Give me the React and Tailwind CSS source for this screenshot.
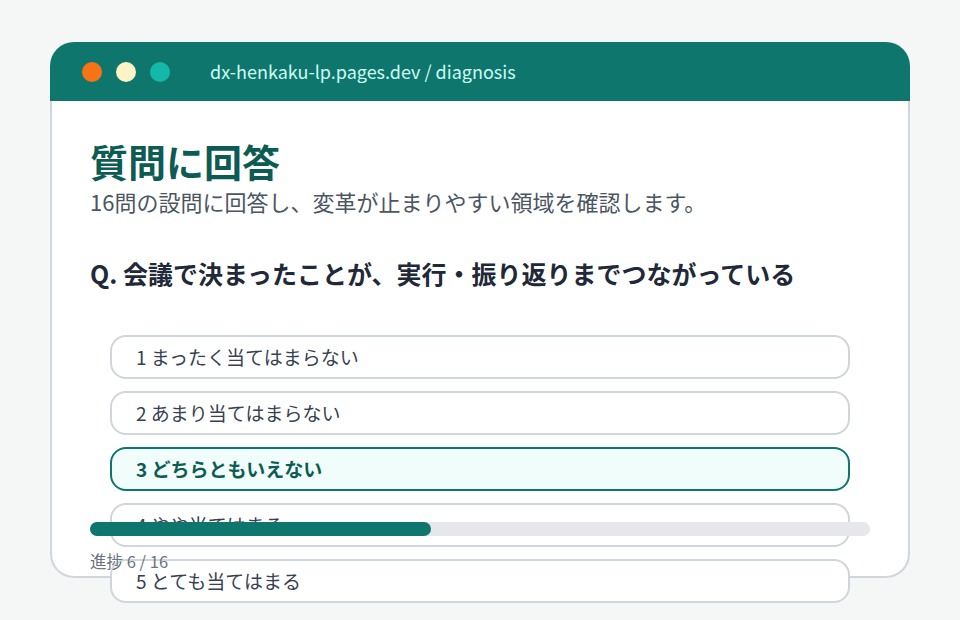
import React from "react";

const options = [
  { value: 1, label: "まったく当てはまらない" },
  { value: 2, label: "あまり当てはまらない" },
  { value: 3, label: "どちらともいえない" },
  { value: 4, label: "やや当てはまる" },
  { value: 5, label: "とても当てはまる" },
];

const App = () => {
  const selected = 3;
  const current = 6;
  const total = 16;

  return (
    <div
      className="min-h-screen bg-[#f5f7f6] pt-[42px] px-[50px]"
      style={{ fontFamily: '"Noto Sans CJK JP", "Noto Sans", sans-serif' }}
    >
      <div className="w-[860px]">
        {/* browser bar */}
        <div className="h-[59px] rounded-t-[24px] bg-[#0f766e] flex items-center pl-[32px]">
          <div className="flex gap-[14px]">
            <span className="w-5 h-5 rounded-full bg-[#f97316]" />
            <span className="w-5 h-5 rounded-full bg-[#fef3c7]" />
            <span className="w-5 h-5 rounded-full bg-[#14b8a6]" />
          </div>
          <span className="ml-[40px] text-[18px] text-[#ccfbf1]">
            dx-henkaku-lp.pages.dev / diagnosis
          </span>
        </div>

        {/* page body */}
        <div className="relative h-[477px] bg-white border-x-2 border-b-2 border-gray-300 rounded-b-[24px] px-[38px] pt-[37px]">
          <h1 className="text-[38px] leading-[46px] font-bold text-[#0d5c53]">質問に回答</h1>
          <p className="mt-[2px] text-[22px] leading-[30px] text-[#4b5563]">
            16問の設問に回答し、変革が止まりやすい領域を確認します。
          </p>
          <h2 className="mt-10 text-[25px] leading-[34px] font-bold text-[#1f2937]">
            Q. 会議で決まったことが、実行・振り返りまでつながっている
          </h2>

          <div className="mt-[45px] mx-5 flex flex-col gap-3">
            {options.map((o) =>
              o.value === selected ? (
                <div
                  key={o.value}
                  className="h-[44px] flex items-center pl-6 rounded-2xl border-2 border-[#0f766e] bg-[#f0fdfa] text-[19px] font-bold text-[#0d5c53]"
                >
                  {o.value} {o.label}
                </div>
              ) : (
                <div
                  key={o.value}
                  className="h-[44px] flex items-center pl-6 rounded-2xl border-2 border-gray-300 bg-white text-[19px] text-[#374151]"
                >
                  {o.value} {o.label}
                </div>
              )
            )}
          </div>

          {/* progress */}
          <div className="absolute left-[38px] right-[38px] bottom-[4px]">
            <div className="h-[14px] rounded-full bg-gray-200">
              <div
                className="h-full rounded-full bg-[#0f766e]"
                style={{ width: `${((current + 1) / total) * 100}%` }}
              />
            </div>
            <p className="mt-[14px] text-[16.5px] leading-[22px] text-[#6b7280]">
              進捗 {current} / {total}
            </p>
          </div>
        </div>
      </div>
    </div>
  );
};

export default App;
